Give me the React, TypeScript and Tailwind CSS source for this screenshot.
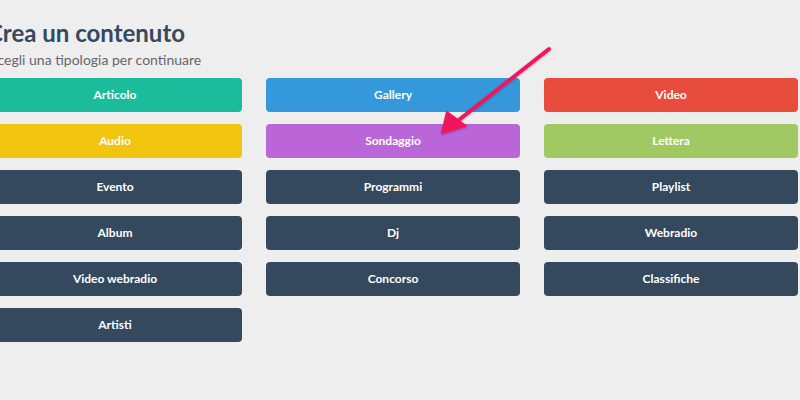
import React from 'react'

interface Tipo {
  label: string
  color: string
}

const tipi: Tipo[] = [
  { label: 'Articolo', color: 'bg-[#1abc9c]' },
  { label: 'Gallery', color: 'bg-[#3498db]' },
  { label: 'Video', color: 'bg-[#e74c3c]' },
  { label: 'Audio', color: 'bg-[#f1c40f]' },
  { label: 'Sondaggio', color: 'bg-[#bb66d8]' },
  { label: 'Lettera', color: 'bg-[#a0c964]' },
  { label: 'Evento', color: 'bg-[#34495e]' },
  { label: 'Programmi', color: 'bg-[#34495e]' },
  { label: 'Playlist', color: 'bg-[#34495e]' },
  { label: 'Album', color: 'bg-[#34495e]' },
  { label: 'Dj', color: 'bg-[#34495e]' },
  { label: 'Webradio', color: 'bg-[#34495e]' },
  { label: 'Video webradio', color: 'bg-[#34495e]' },
  { label: 'Concorso', color: 'bg-[#34495e]' },
  { label: 'Classifiche', color: 'bg-[#34495e]' },
  { label: 'Artisti', color: 'bg-[#34495e]' },
]

export default function App() {
  return (
    <div className="relative w-[800px] h-[400px] overflow-hidden bg-[#eeeeee] font-['Lato','Liberation_Sans',sans-serif]">
      <div className="-ml-[12px] pt-[18px]">
        <h1 className="-ml-[1px] text-[24px] leading-[30px] font-bold text-[#34495e]">Crea un contenuto</h1>
        <p className="ml-[2px] mt-[2px] text-[14px] leading-[20px] text-[#666666]">Scegli una tipologia per continuare</p>

        <div className="mt-[8px] grid grid-cols-[254px_254px_254px] gap-x-[24px] gap-y-[12px]">
          {tipi.map((t) => (
            <button
              key={t.label}
              className={`${t.color} h-[34px] rounded-[4px] text-white text-[12px] font-bold`}
            >
              {t.label}
            </button>
          ))}
        </div>
      </div>

      {/* freccia */}
      <svg className="absolute left-0 top-0 pointer-events-none" width="800" height="400">
        <defs>
          <filter id="ombra" x="-20%" y="-20%" width="140%" height="140%">
            <feDropShadow dx="0" dy="1" stdDeviation="1" floodColor="#000" floodOpacity="0.25" />
          </filter>
        </defs>
        <g filter="url(#ombra)" fill="#f0175d" stroke="#f0175d">
          <line x1="549" y1="49" x2="455" y2="123" strokeWidth="4" strokeLinecap="round" />
          <polygon points="442,133 447,112 466,126" strokeWidth="2" strokeLinejoin="round" />
        </g>
      </svg>
    </div>
  )
}
